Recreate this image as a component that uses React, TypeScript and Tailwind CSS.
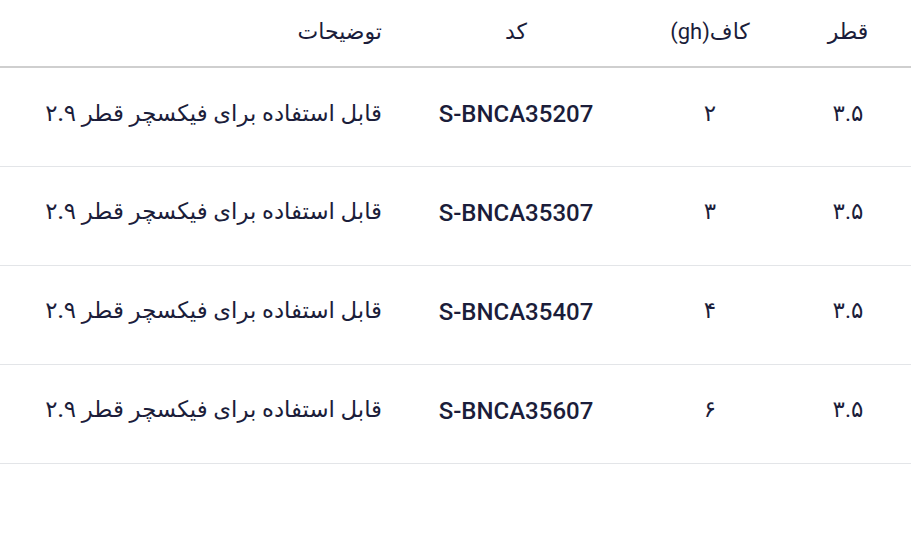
import React from 'react';

interface Row {
  diameter: string;
  gh: string;
  code: string;
  desc: string;
}

const rows: Row[] = [
  { diameter: '۳.۵', gh: '۲', code: 'S-BNCA35207', desc: 'قابل استفاده برای فیکسچر قطر ۲.۹' },
  { diameter: '۳.۵', gh: '۳', code: 'S-BNCA35307', desc: 'قابل استفاده برای فیکسچر قطر ۲.۹' },
  { diameter: '۳.۵', gh: '۴', code: 'S-BNCA35407', desc: 'قابل استفاده برای فیکسچر قطر ۲.۹' },
  { diameter: '۳.۵', gh: '۶', code: 'S-BNCA35607', desc: 'قابل استفاده برای فیکسچر قطر ۲.۹' },
];

export default function App() {
  return (
    <div
      dir="rtl"
      className="h-[542px] w-[911px] bg-white text-[#1b1d3a]"
      style={{ fontFamily: 'Roboto, "DejaVu Sans", sans-serif' }}
    >
      <table className="w-full border-collapse">
        <thead>
          <tr className="h-[67px] border-b-2 border-[#cfcfcf]">
            <th className="w-[126px] pb-[3px] text-center text-[22px] font-normal">قطر</th>
            <th className="w-[150px] pb-[3px] text-center text-[22px] font-normal">کاف(gh)</th>
            <th className="w-[238px] pb-[3px] text-center text-[22px] font-normal">کد</th>
            <th className="pb-[3px] pr-[15px] text-right text-[22px] font-normal">توضیحات</th>
          </tr>
        </thead>
        <tbody>
          {rows.map((r) => (
            <tr key={r.code} className="h-[99px] border-b border-[#e3e5e8]">
              <td className="pb-[6px] text-center text-[23px]">{r.diameter}</td>
              <td className="pb-[6px] text-center text-[23px]">{r.gh}</td>
              <td className="pb-[6px] text-center text-[24px] font-medium">{r.code}</td>
              <td className="whitespace-nowrap pb-[6px] pr-[15px] text-right text-[22.8px] font-medium">
                {r.desc}
              </td>
            </tr>
          ))}
        </tbody>
      </table>
    </div>
  );
}
